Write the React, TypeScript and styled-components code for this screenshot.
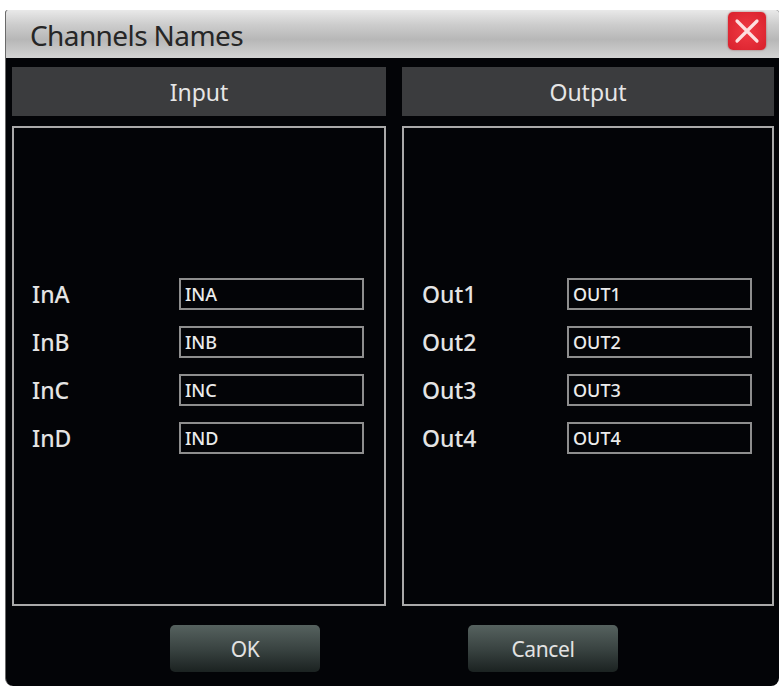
import styled, { createGlobalStyle } from 'styled-components';

// Page defaults
const GlobalStyle = createGlobalStyle`
    html, body {
        margin: 0;
        padding: 0;
        background: #ffffff;
    }
    * {
        box-sizing: border-box;
    }
`;

const inputChannels = [
    {label: "InA", name: "INA"},
    {label: "InB", name: "INB"},
    {label: "InC", name: "INC"},
    {label: "InD", name: "IND"},
];

const outputChannels = [
    {label: "Out1", name: "OUT1"},
    {label: "Out2", name: "OUT2"},
    {label: "Out3", name: "OUT3"},
    {label: "Out4", name: "OUT4"},
];

// Styled Components
const Window = styled.div`
    margin: 10px 0 0 5px;
    width: 774px;
    height: 676px;
    display: flex;
    flex-direction: column;
    background: #030407;
    border-left: 1px solid #6a6a6a;
    border-radius: 3px 3px 8px 8px;
    overflow: hidden;
`;

const TitleBar = styled.div`
    height: 48px;
    flex: none;
    display: flex;
    align-items: flex-start;
    justify-content: space-between;
    padding: 0 13px 0 24px;
    background: linear-gradient(#e9e9e9 0%, #cdcdcd 30%, #b7b7b7 62%, #d3d3d3 100%);
`;

const Title = styled.span`
    margin-top: 6px;
    font-family: "Noto Sans", sans-serif;
    font-size: 28px;
    line-height: 38px;
    color: #262626;
    letter-spacing: -0.6px;
`;

const CloseButton = styled.button`
    margin-top: 2px;
    width: 38px;
    height: 38px;
    padding: 0;
    border: none;
    border-radius: 5px;
    background: radial-gradient(circle at 50% 50%, #f03a44 0%, #d8202c 100%);
    box-shadow: 0 0 2px rgba(120, 0, 0, 0.6);
    display: flex;
    align-items: center;
    justify-content: center;
`;

const Body = styled.div`
    flex: 1;
    display: flex;
    flex-direction: column;
    padding: 9px 5px 0 6px;
`;

const Columns = styled.div`
    display: grid;
    grid-template-columns: 374px 372px;
    column-gap: 16px;
`;

const Column = styled.div`
    display: flex;
    flex-direction: column;
    gap: 10px;
`;

const Header = styled.div`
    height: 49px;
    display: flex;
    align-items: center;
    justify-content: center;
    background: #3b3c3e;
    font-family: "Noto Sans", sans-serif;
    font-size: 23px;
    color: #e6e6e6;
`;

const Panel = styled.div`
    height: 480px;
    border: 2px solid #a9a9a9;
    display: grid;
    grid-template-columns: 1fr 185px;
    align-content: center;
    align-items: center;
    row-gap: 16px;
    padding: 0 20px 0 18px;
`;

const Label = styled.span`
    font-family: "Noto Sans", sans-serif;
    font-size: 23px;
    font-weight: 500;
    color: #e4e4e4;
`;

const Field = styled.input`
    height: 32px;
    width: 100%;
    padding: 0 4px;
    border: 2px solid #8e8e8e;
    background: transparent;
    font-family: "Noto Sans", sans-serif;
    font-size: 18px;
    font-weight: 500;
    color: #ececec;
    outline: none;
`;

const Footer = styled.div`
    display: flex;
    gap: 148px;
    padding: 19px 0 0 158px;
`;

const Button = styled.button`
    width: 150px;
    height: 47px;
    border: none;
    border-radius: 5px;
    background: linear-gradient(#56625f 0%, #3a4442 50%, #1b2221 100%);
    font-family: "Noto Sans", sans-serif;
    font-size: 21px;
    letter-spacing: -0.4px;
    color: #e2e2e2;
`;

function ChannelPanel({title, channels} : {title: string, channels: {label: string, name: string}[]}) {
    return (
        <Column>
            <Header>{title}</Header>
            <Panel>
                {channels.map(ch => [
                    <Label key={ch.label}>{ch.label}</Label>,
                    <Field key={ch.name} defaultValue={ch.name} />,
                ])}
            </Panel>
        </Column>
    );
}

export default function App() {
    return (
        <>
            <GlobalStyle />
            <Window>
                <TitleBar>
                    <Title>Channels Names</Title>
                    <CloseButton aria-label="Close">
                        <svg width="26" height="26" viewBox="0 0 26 26">
                            <path d="M3 3 L23 23 M23 3 L3 23" stroke="#fde0e0" strokeWidth="3.2" strokeLinecap="round" />
                        </svg>
                    </CloseButton>
                </TitleBar>
                <Body>
                    <Columns>
                        <ChannelPanel title="Input" channels={inputChannels} />
                        <ChannelPanel title="Output" channels={outputChannels} />
                    </Columns>
                    <Footer>
                        <Button>OK</Button>
                        <Button>Cancel</Button>
                    </Footer>
                </Body>
            </Window>
        </>
    );
}
